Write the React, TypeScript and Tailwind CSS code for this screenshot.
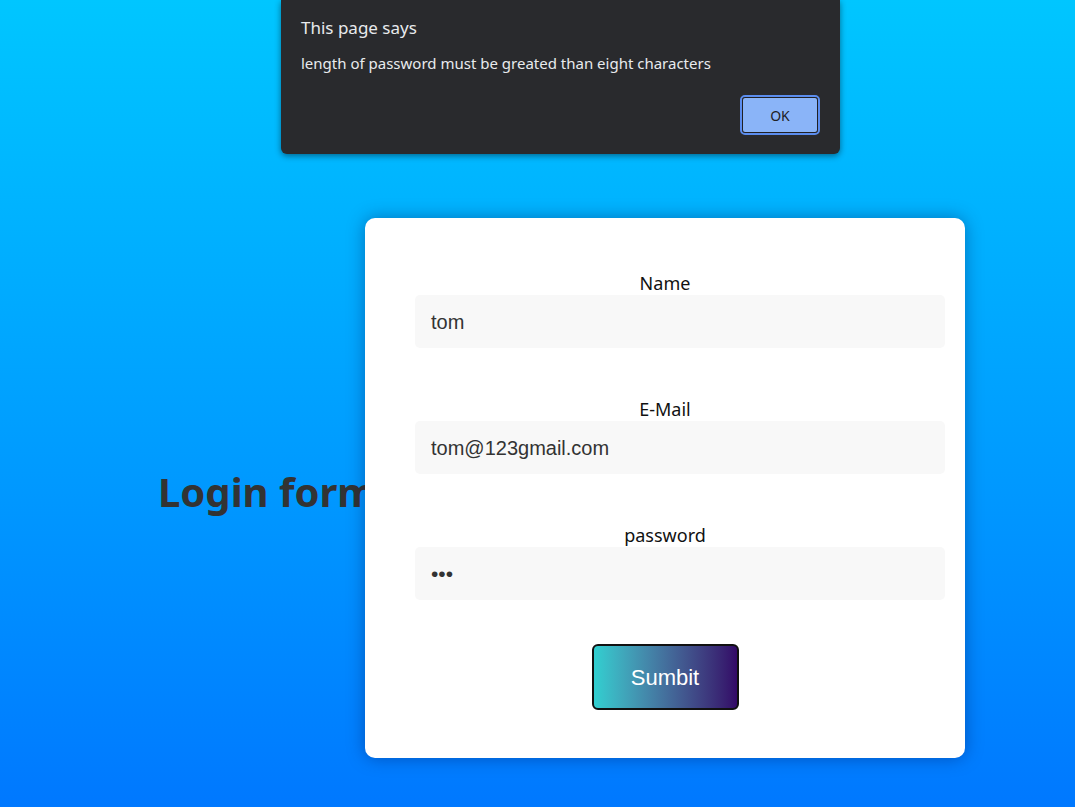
import React from "react";

export default function App() {
  const ui = { fontFamily: '"Noto Sans", "Open Sans", sans-serif' };
  const arial = { fontFamily: '"Liberation Sans", Arial, sans-serif' };
  return (
    <div className="relative h-[807px] w-full overflow-hidden bg-gradient-to-b from-[#00c6ff] to-[#0078ff]">
      {/* alert dialog */}
      <div
        className="absolute left-[281px] top-0 z-20 h-[154px] w-[559px] rounded-b-[6px] bg-[#292a2d] shadow-[0_2px_6px_rgba(0,0,0,0.45)]"
        style={ui}
      >
        <div className="flex h-full flex-col px-[20px]">
          <div className="pt-[14px] text-[17px] leading-[28px] text-[#e8eaed]">This page says</div>
          <div className="mt-[10px] text-[15px] leading-[22px] text-[#e8eaed]">
            length of password must be greated than eight characters
          </div>
          <div className="mt-auto mb-[19px] flex justify-end">
            <div className="rounded-[5px] border-2 border-[#5b8def] p-0">
              <button className="flex h-[36px] w-[76px] items-center justify-center rounded-[3px] border border-[#202124] bg-[#8ab4f8] text-[14px] text-[#202124]">
                OK
              </button>
            </div>
          </div>
        </div>
      </div>

      {/* main row */}
      <div className="mt-[218px] flex items-center pl-[158px]">
        <h1
          className="mt-[8px] w-[207px] shrink-0 whitespace-nowrap text-[40px] font-bold leading-[48px] text-[#333333]"
          style={ui}
        >
          Login form
        </h1>
        <div className="relative z-10 flex w-[600px] shrink-0 flex-col rounded-[10px] bg-white pt-[53px] pb-[48px] shadow-[0_0_18px_rgba(0,0,60,0.35)]">
          {[
            { label: "Name", value: "tom" },
            { label: "E-Mail", value: "tom@123gmail.com" },
            { label: "password", value: "•••" },
          ].map((f, i) => (
            <div key={f.label} className={i < 2 ? "mb-[49px]" : "mb-[44px]"}>
              <div className="h-[24px] text-center text-[18px] leading-[24px] text-[#111111]" style={ui}>
                {f.label}
              </div>
              <div
                className="ml-[50px] flex h-[53px] w-[530px] items-center rounded-[5px] bg-[#f8f8f8] pl-[16px] text-[20px] text-[#333333]"
                style={arial}
              >
                {f.label === "password" ? (
                  <span className="text-[21px]">•••</span>
                ) : (
                  f.value
                )}
              </div>
            </div>
          ))}
          <div className="flex justify-center">
            <button
              className="h-[66px] w-[147px] rounded-[6px] border-2 border-[#111111] bg-gradient-to-r from-[#30cfd0] to-[#330867] text-[22px] text-white"
              style={arial}
            >
              Sumbit
            </button>
          </div>
        </div>
      </div>
    </div>
  );
}
